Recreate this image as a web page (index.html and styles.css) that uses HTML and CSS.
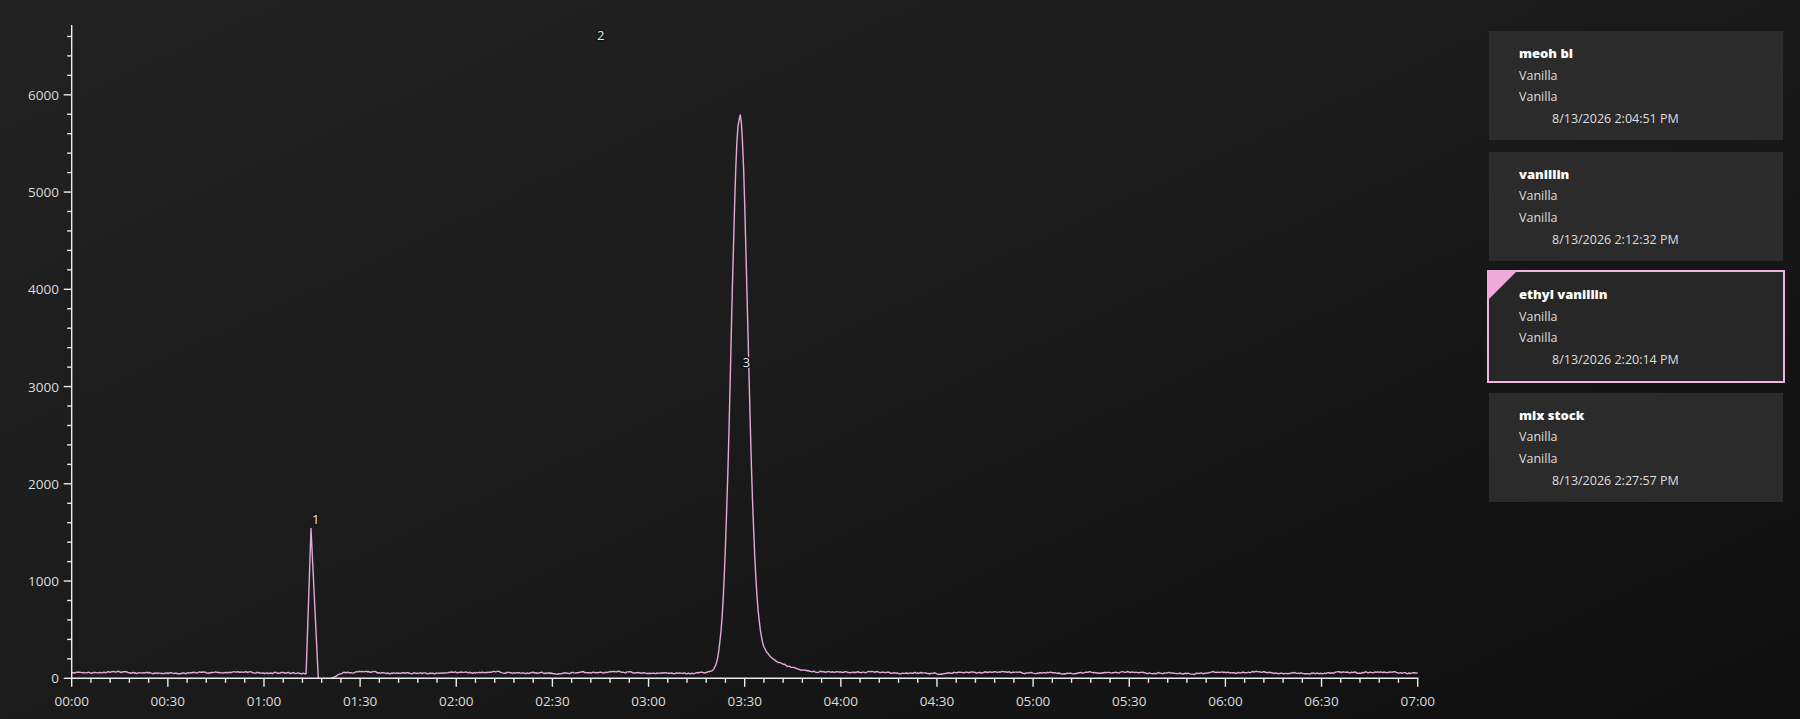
FILE: index.html
```html
<!DOCTYPE html>
<html lang="en">
<head>
  <meta charset="UTF-8">
  <title>Vanilla - Chromatogram</title>
  <link rel="stylesheet" href="styles.css">
</head>
<body>

  <div class="chart">
    <svg id="plot" class="plot" width="1470" height="719" viewBox="0 0 1470 719">
      <path id="trace" class="trace" d=""></path>
      <g id="axes" class="axes"></g>
      <g id="labels" class="tick-labels"></g>
      <g class="peak-labels">
        <text x="315.7" y="518.5">1</text>
        <text x="600.7" y="35">2</text>
        <text x="746.5" y="362">3</text>
      </g>
    </svg>
  </div>

  <div class="runs">
    <div class="run">
      <div class="run-name">meoh bl</div>
      <div>Vanilla</div>
      <div>Vanilla</div>
      <div class="run-date">8/13/2026 2:04:51 PM</div>
    </div>
    <div class="run">
      <div class="run-name">vanillin</div>
      <div>Vanilla</div>
      <div>Vanilla</div>
      <div class="run-date">8/13/2026 2:12:32 PM</div>
    </div>
    <div class="run selected">
      <div class="run-name">ethyl vanillin</div>
      <div>Vanilla</div>
      <div>Vanilla</div>
      <div class="run-date">8/13/2026 2:20:14 PM</div>
    </div>
    <div class="run">
      <div class="run-name">mix stock</div>
      <div>Vanilla</div>
      <div>Vanilla</div>
      <div class="run-date">8/13/2026 2:27:57 PM</div>
    </div>
  </div>

  <script>
    const SVG_NS = 'http://www.w3.org/2000/svg';
    const X0 = 71.7, PX_PER_S = 3.2047;     // 00:00 position, pixels per second
    const Y0 = 678.3, PX_PER_UNIT = 0.09725; // zero line, pixels per signal unit
    const Y_TOP = 25, T_END = 420;

    const sx = t => X0 + t * PX_PER_S;
    const sy = v => Y0 - v * PX_PER_UNIT;

    const axes = document.getElementById('axes');
    const labels = document.getElementById('labels');

    function line(x1, y1, x2, y2) {
      const l = document.createElementNS(SVG_NS, 'line');
      l.setAttribute('x1', x1); l.setAttribute('y1', y1);
      l.setAttribute('x2', x2); l.setAttribute('y2', y2);
      axes.appendChild(l);
    }

    function label(x, y, text, anchor) {
      const el = document.createElementNS(SVG_NS, 'text');
      el.setAttribute('x', x);
      el.setAttribute('y', y);
      el.setAttribute('text-anchor', anchor);
      el.textContent = text;
      labels.appendChild(el);
    }

    // y axis: major every 1000, minor every 200
    line(X0, Y_TOP, X0, Y0);
    for (let v = 0; v <= 6600; v += 200) {
      const y = sy(v);
      if (v % 1000 === 0) {
        line(X0 - 8, y, X0, y);
        label(59, y, String(v), 'end');
      } else {
        line(X0 - 4.5, y, X0, y);
      }
    }

    // x axis: major every 30 s, minor every 6 s
    line(X0, Y0, sx(T_END) + 1, Y0);
    for (let t = 0; t <= T_END; t += 6) {
      const x = sx(t);
      if (t % 30 === 0) {
        line(x, Y0, x, Y0 + 8.5);
        const mm = String(Math.floor(t / 60)).padStart(2, '0');
        const ss = String(t % 60).padStart(2, '0');
        label(x, 701, mm + ':' + ss, 'middle');
      } else {
        line(x, Y0, x, Y0 + 4.5);
      }
    }

    // detector signal
    let seed = 11;
    function rand() {
      seed = (seed * 16807) % 2147483647;
      return seed / 2147483647;
    }

    let last = 0;
    function baseline(t) {
      const n = (rand() - 0.5) * 22;
      last = last * 0.45 + n * 0.55;
      return 57 + 6 * Math.sin(t / 6.3) + 4 * Math.sin(t / 2.1 + 1.3) + last;
    }

    function signal(t) {
      let v = baseline(t);
      const dt = t - 208.3;
      v += 5680 * Math.exp(-dt * dt / (2 * 2.5 * 2.5));
      if (dt > 0) v += 800 * Math.exp(-dt / 6.24) * (1 - Math.exp(-dt / 2.5));
      return v;
    }

    let d = '';
    let spikeDone = false;
    for (let i = 0; i <= 1200; i++) {
      const t = i * 0.35;
      if (t > 73.2 && t < 81.1) {
        if (!spikeDone) {
          d += ' L' + sx(74.67).toFixed(1) + ',' + sy(1540).toFixed(1);
          d += ' L' + sx(76.95).toFixed(1) + ',' + sy(0).toFixed(1);
          d += ' M' + sx(81.1).toFixed(1) + ',' + sy(0).toFixed(1);
          spikeDone = true;
        }
        continue;
      }
      let v = signal(t);
      if (t >= 81.1 && t < 84.8) v *= (t - 81.1) / 3.7;
      d += (d ? ' L' : 'M') + sx(t).toFixed(1) + ',' + sy(v).toFixed(1);
    }
    document.getElementById('trace').setAttribute('d', d);
  </script>

</body>
</html>
```

FILE: styles.css
```css
body {
  margin: 0;
  padding: 0;
  height: 100vh;
  overflow: hidden;
  display: flex;
  font-family: "Open Sans", "Noto Sans", sans-serif;
  color: #e2e2e2;
  background: linear-gradient(155deg, #222222 0%, #1b1b1b 45%, #131313 80%, #0f0f0f 100%);
}

.chart {
  flex: 0 0 1470px;
  height: 719px;
}

.plot {
  display: block;
}

.trace {
  fill: none;
  stroke: #e4a8d5;
  stroke-width: 1.4;
  stroke-linejoin: round;
}

.axes line {
  stroke: #ececec;
  stroke-width: 1.4;
}

.tick-labels text {
  font-family: "Open Sans", "Noto Sans", sans-serif;
  font-size: 13.5px;
  fill: #dcdcdc;
  dominant-baseline: central;
}

.peak-labels text {
  font-family: "Open Sans", "Noto Sans", sans-serif;
  font-size: 13px;
  fill: #e6e6e6;
  stroke: #151515;
  stroke-width: 3px;
  paint-order: stroke;
  text-anchor: middle;
  dominant-baseline: central;
}

.runs {
  width: 330px;
  padding: 29px 15px 0 17px;
  box-sizing: border-box;
  display: flex;
  flex-direction: column;
  gap: 7.5px;
}

.run {
  position: relative;
  height: 113px;
  box-sizing: border-box;
  padding: 12px 0 0 30px;
  border: 2px solid transparent;
  background-color: #2b2b2b;
  background-clip: padding-box;
  font-size: 12.5px;
  line-height: 21.7px;
  color: #dedede;
}

.run-name {
  font-size: 13px;
  font-weight: 800;
  color: #ffffff;
}

.run-date {
  padding-left: 33px;
}

.run.selected {
  border-color: #f2b4e0;
  background-color: #272727;
}

/* corner flag on the active run */
.run.selected::before {
  content: "";
  position: absolute;
  top: -2px;
  left: -2px;
  width: 0;
  height: 0;
  border-top: 31px solid #f1a8dc;
  border-right: 31px solid transparent;
}
```
